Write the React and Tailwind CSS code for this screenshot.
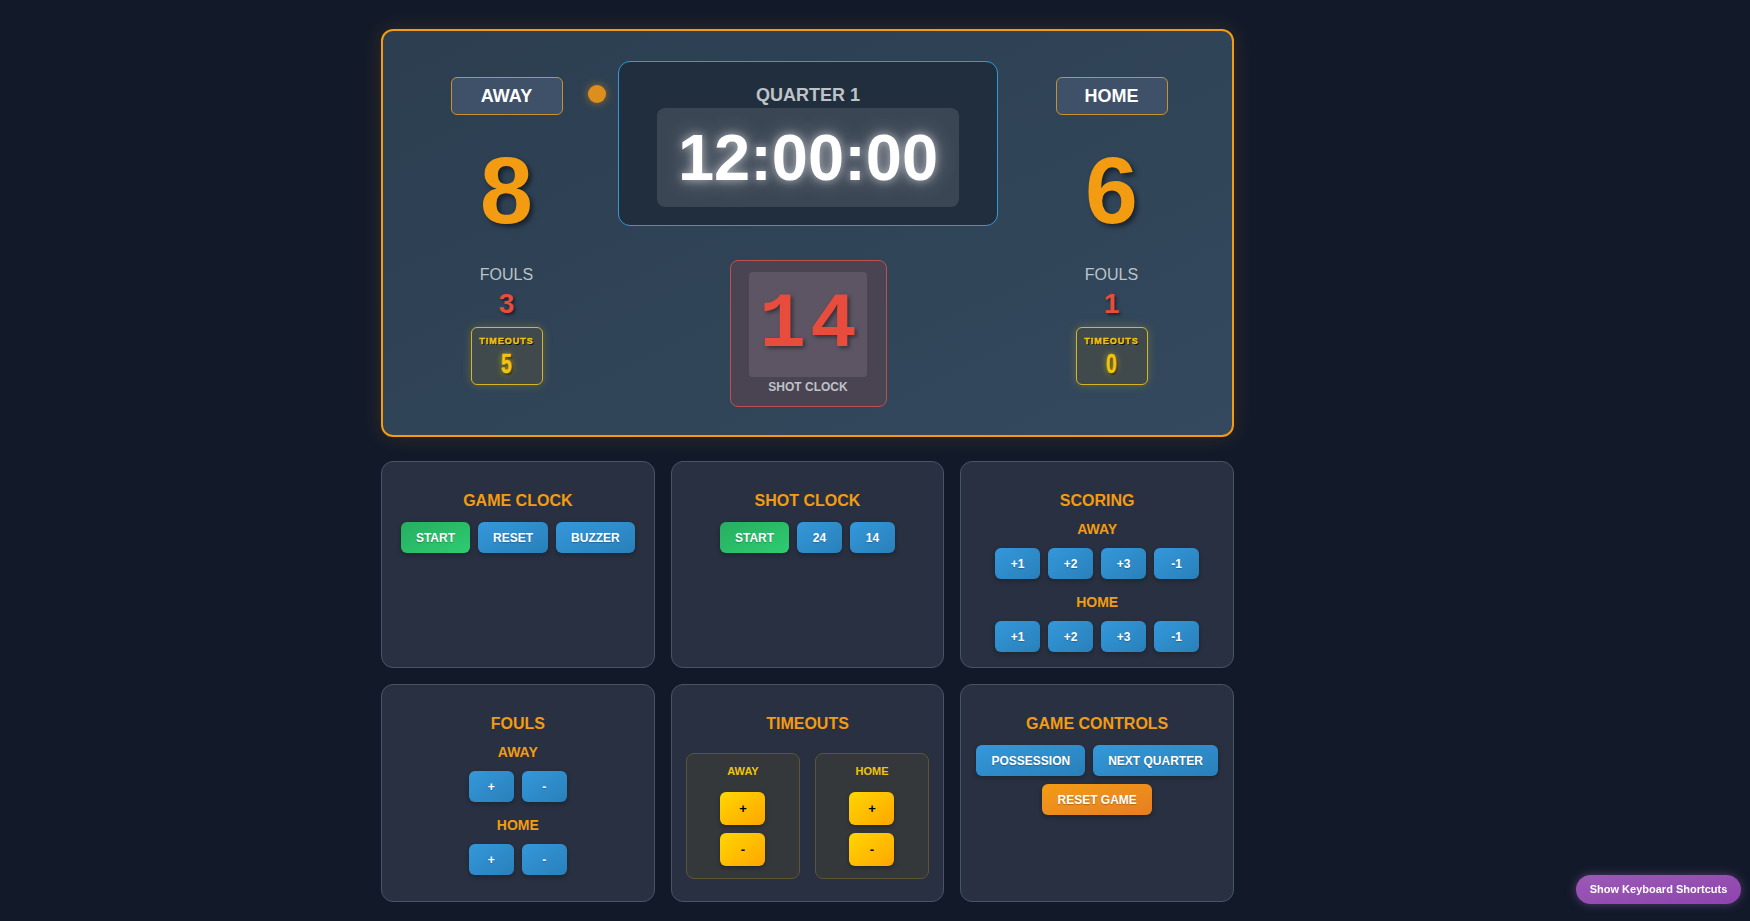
import React from "react";

const BTN_BASE =
  "h-[31px] min-w-[45px] px-[15px] rounded-md text-[12px] leading-none font-bold text-white flex items-center justify-center shadow-[0_2px_4px_rgba(0,0,0,0.25)] [text-shadow:0_1px_1px_rgba(0,0,0,0.25)]";
const BLUE = "bg-linear-to-br from-[#3498db] to-[#2980b9]";
const GREEN = "bg-linear-to-br from-[#27ae60] to-[#2ecc71]";
const ORANGE = "bg-linear-to-br from-[#f39c12] to-[#e67e22]";

function Btn({ children, color }) {
  return <button className={`${BTN_BASE} ${color}`}>{children}</button>;
}

function YellowBtn({ children }) {
  return (
    <button className="h-[33px] w-[45px] rounded-md bg-linear-to-br from-[#ffd700] to-[#ffa500] text-[13px] leading-none font-bold text-black flex items-center justify-center shadow-[0_2px_4px_rgba(0,0,0,0.3)]">
      {children}
    </button>
  );
}

function Panel({ title, children }) {
  return (
    <div className="rounded-xl border border-[#4a5366] bg-[#283041] pt-[29px] flex flex-col items-center">
      <div className="text-[16px] leading-[20px] font-bold text-[#f39c12]">{title}</div>
      {children}
    </div>
  );
}

function SubLabel({ children, className }) {
  return (
    <div className={`text-[14px] leading-[18px] font-bold text-[#f39c12] ${className}`}>{children}</div>
  );
}

function Team({ name, score, fouls, timeouts, possession }) {
  return (
    <div className="flex flex-col items-center">
      <div className="relative mt-[16px] w-[112px] h-[38px] rounded-md border border-[#c8912e] bg-[#3e5169] flex items-center justify-center text-[18px] font-bold text-white">
        {name}
        {possession && (
          <div className="absolute left-[136px] top-[7px] w-[18px] h-[18px] rounded-full bg-[#dd8f1e] shadow-[0_0_8px_rgba(221,143,30,0.6)]" />
        )}
      </div>
      <div className="mt-[27px] text-[95px] leading-[96px] font-bold text-[#f39c12] [text-shadow:3px_3px_5px_rgba(0,0,0,0.5)]">
        {score}
      </div>
      <div className="mt-[27px] text-[16px] leading-[20px] text-[#bdc3c7]">FOULS</div>
      <div className="mt-[3px] text-[28px] leading-[32px] font-bold text-[#e74c3c] [text-shadow:2px_2px_3px_rgba(0,0,0,0.5)]">
        {fouls}
      </div>
      <div className="mt-[7px] w-[72px] h-[58px] rounded-md border border-[#d4b52a] bg-[#404a4c] shadow-[0_0_10px_rgba(241,196,15,0.25)] flex flex-col items-center pt-[8px]">
        <div className="text-[9px] leading-[11px] font-black tracking-[1px] text-[#f1c40f] [-webkit-text-stroke:0.4px_#f1c40f] [text-shadow:1px_1px_0_#000]">
          TIMEOUTS
        </div>
        <div className="mt-[3px] inline-block scale-x-[0.72] text-[27px] leading-[28px] font-bold text-[#f1c40f] [-webkit-text-stroke:0.5px_#f1c40f] [text-shadow:0_0_8px_rgba(241,196,15,0.7),2px_2px_2px_rgba(0,0,0,0.6)]">
          {timeouts}
        </div>
      </div>
    </div>
  );
}

export default function App() {
  return (
    <div className="min-h-screen bg-[#121a2a] font-['Liberation_Sans',Arial,sans-serif] pt-[29px] pb-[19px]">
      <div className="ml-[381px] w-[853px]">
        {/* Scoreboard */}
        <div className="rounded-xl border-2 border-[#f39c12] bg-linear-to-br from-[#2c3e50] to-[#34495e] shadow-[0_0_20px_rgba(243,156,18,0.15)] grid grid-cols-[223px_380px_1fr] pl-[12px] pr-[7px] pt-[30px] pb-[28px]">
          <Team name="AWAY" score="8" fouls="3" timeouts="5" possession />
          <div className="flex flex-col items-center">
            <div className="w-[380px] h-[165px] rounded-xl border border-[#3498db] bg-[#212e3d] flex flex-col items-center pt-[20px]">
              <div className="text-[18px] leading-[26px] font-bold text-[#bdc3c7]">QUARTER 1</div>
              <div className="w-[302px] h-[99px] rounded-lg bg-[#3b4654] flex items-center justify-center">
                <span className="text-[65px] leading-none font-bold text-white [text-shadow:0_0_10px_rgba(255,255,255,0.55),0_0_22px_rgba(255,255,255,0.35)]">
                  12:00:00
                </span>
              </div>
            </div>
            <div className="mt-[34px] w-[157px] h-[147px] rounded-lg border border-[#c0504d] bg-[#4a4352] flex flex-col items-center pt-[11px]">
              <div className="w-[118px] h-[105px] rounded bg-[#5d5564] flex items-center justify-center">
                <span className="font-['Liberation_Mono','Courier_New',monospace] text-[78px] leading-none font-bold tracking-[4px] pl-[4px] text-[#e74c3c] [text-shadow:2px_2px_4px_rgba(0,0,0,0.45)]">
                  14
                </span>
              </div>
              <div className="mt-[3px] text-[12px] leading-[14px] font-bold text-[#bdc3c7]">SHOT CLOCK</div>
            </div>
          </div>
          <Team name="HOME" score="6" fouls="1" timeouts="0" />
        </div>

        {/* Controls */}
        <div className="mt-[24px] grid grid-cols-3 gap-4">
          <Panel title="GAME CLOCK">
            <div className="mt-[11px] flex gap-2">
              <Btn color={GREEN}>START</Btn>
              <Btn color={BLUE}>RESET</Btn>
              <Btn color={BLUE}>BUZZER</Btn>
            </div>
          </Panel>
          <Panel title="SHOT CLOCK">
            <div className="mt-[11px] flex gap-2">
              <Btn color={GREEN}>START</Btn>
              <Btn color={BLUE}>24</Btn>
              <Btn color={BLUE}>14</Btn>
            </div>
          </Panel>
          <div className="rounded-xl border border-[#4a5366] bg-[#283041] pt-[29px] pb-[15px] flex flex-col items-center">
            <div className="text-[16px] leading-[20px] font-bold text-[#f39c12]">SCORING</div>
            <SubLabel className="mt-[9px]">AWAY</SubLabel>
            <div className="mt-[10px] flex gap-2">
              <Btn color={BLUE}>+1</Btn>
              <Btn color={BLUE}>+2</Btn>
              <Btn color={BLUE}>+3</Btn>
              <Btn color={BLUE}>-1</Btn>
            </div>
            <SubLabel className="mt-[14px]">HOME</SubLabel>
            <div className="mt-[10px] flex gap-2">
              <Btn color={BLUE}>+1</Btn>
              <Btn color={BLUE}>+2</Btn>
              <Btn color={BLUE}>+3</Btn>
              <Btn color={BLUE}>-1</Btn>
            </div>
          </div>

          <Panel title="FOULS">
            <SubLabel className="mt-[9px]">AWAY</SubLabel>
            <div className="mt-[10px] flex gap-2">
              <Btn color={BLUE}>+</Btn>
              <Btn color={BLUE}>-</Btn>
            </div>
            <SubLabel className="mt-[14px]">HOME</SubLabel>
            <div className="mt-[10px] flex gap-2">
              <Btn color={BLUE}>+</Btn>
              <Btn color={BLUE}>-</Btn>
            </div>
          </Panel>
          <div className="rounded-xl border border-[#4a5366] bg-[#283041] pt-[29px] pb-[22px] flex flex-col items-center">
            <div className="text-[16px] leading-[20px] font-bold text-[#f39c12]">TIMEOUTS</div>
            <div className="mt-[19px] flex gap-[15px]">
              {["AWAY", "HOME"].map((t) => (
                <div
                  key={t}
                  className="w-[114px] h-[126px] rounded-lg border border-[#5e5633] bg-[#34383b] flex flex-col items-center pt-[10px]"
                >
                  <div className="text-[11px] leading-[14px] font-bold text-[#f1c40f]">{t}</div>
                  <div className="mt-[14px]">
                    <YellowBtn>+</YellowBtn>
                  </div>
                  <div className="mt-[8px]">
                    <YellowBtn>-</YellowBtn>
                  </div>
                </div>
              ))}
            </div>
          </div>
          <Panel title="GAME CONTROLS">
            <div className="mt-[11px] w-full flex flex-wrap justify-center gap-2 px-[8px]">
              <Btn color={BLUE}>POSSESSION</Btn>
              <Btn color={BLUE}>NEXT QUARTER</Btn>
              <Btn color={ORANGE}>RESET GAME</Btn>
            </div>
          </Panel>
        </div>
      </div>

      <button className="fixed right-[9px] bottom-[17px] w-[165px] h-[29px] rounded-full bg-linear-to-br from-[#9b59b6] to-[#8e44ad] text-white text-[11px] font-bold leading-none shadow-[0_0_10px_rgba(155,89,182,0.5)]">
        Show Keyboard Shortcuts
      </button>
    </div>
  );
}
